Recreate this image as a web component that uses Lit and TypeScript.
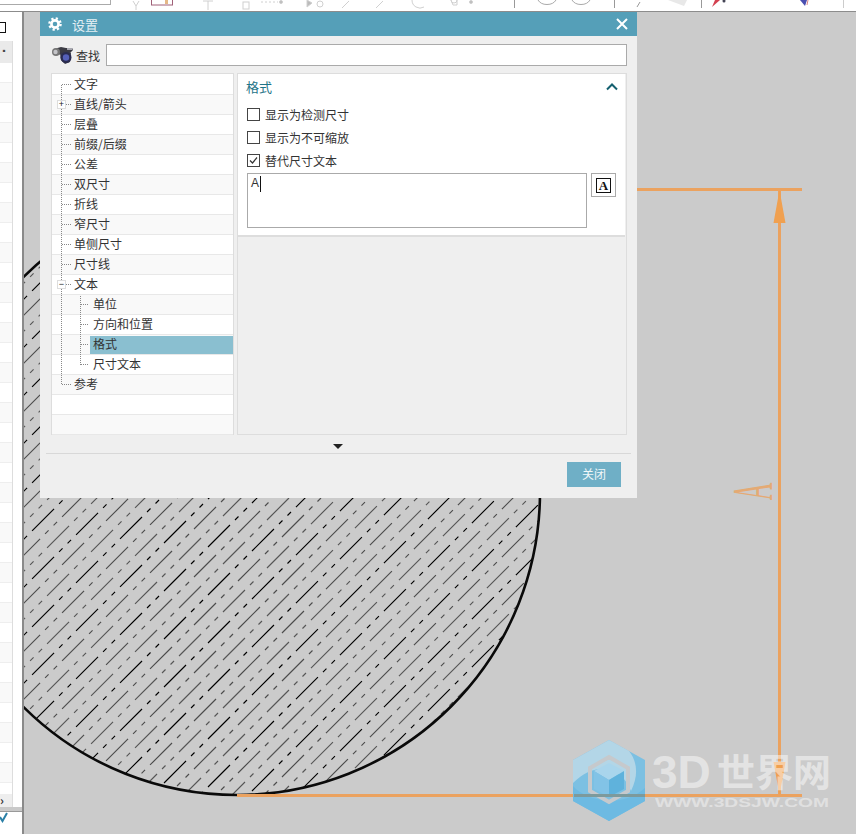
import { LitElement, html, css, svg } from "lit";
import { customElement } from "lit/decorators.js";

interface Row { t: string; lv: number; sel?: boolean; tog?: string; }
const ROWS: Row[] = [
  { t: "文字", lv: 0 },
  { t: "直线/箭头", lv: 0, tog: "+" },
  { t: "层叠", lv: 0 },
  { t: "前缀/后缀", lv: 0 },
  { t: "公差", lv: 0 },
  { t: "双尺寸", lv: 0 },
  { t: "折线", lv: 0 },
  { t: "窄尺寸", lv: 0 },
  { t: "单侧尺寸", lv: 0 },
  { t: "尺寸线", lv: 0 },
  { t: "文本", lv: 0, tog: "−" },
  { t: "单位", lv: 1 },
  { t: "方向和位置", lv: 1 },
  { t: "格式", lv: 1, sel: true },
  { t: "尺寸文本", lv: 1 },
  { t: "参考", lv: 0 },
  { t: "", lv: -1 },
  { t: "", lv: -1 },
];

function hatch() {
  const out = [];
  const phases = [8, 38, 23];
  const colors = ["#000", "#4c4c4c", "#565656"];
  const root2 = Math.SQRT2;
  for (let k = -49; k < 45; k++) {
    const c = 803 + 16 * k;
    const m = ((k % 3) + 3) % 3;
    const off = -(200 + phases[m]) * root2;
    out.push(svg`<line x1="0" y1=${c} x2=${c} y2="0"
      stroke=${colors[m]} stroke-width="1.15"
      stroke-dasharray="31.1 7.07 4.95 7.07 4.95 7.06"
      stroke-dashoffset=${off}></line>`);
  }
  return out;
}

@customElement("app-root")
export class AppRoot extends LitElement {
  static styles = css`
    :host { display: block; width: 856px; height: 834px; overflow: hidden; position: relative;
      font-family: "Noto Sans CJK SC", "Noto Sans", sans-serif; font-size: 12px; color: #333; background: #fff; }
    .top { height: 11px; background: #fff; border-bottom: 1px solid #8c8c8c; overflow: hidden; }
    .top svg { display: block; }
    .main { display: flex; height: 822px; }
    .side { width: 22px; background: #fff; display: flex; flex-direction: column; overflow: hidden; }
    .side-tick { height: 29px; flex: none; }
    .side-tick i { display: block; width: 5px; height: 9px; margin-top: 10px; border: 1px solid #111; border-left: none; }
    .side-list { width: 12px; border-right: 1px solid #ddd; flex: 1; display: flex; flex-direction: column; overflow: hidden; }
    .side-head { height: 22px; background: #eaeaea; flex: none; font-size: 8px; line-height: 20px; color: #444; }
    .side-row { height: 20px; flex: none; border-bottom: 1px solid #eee; box-sizing: border-box; }
    .side-row.alt { background: #f9f9f9; }
    .side-gap { flex: 1; }
    .side-arrow { height: 13px; background: #eee; font-size: 12px; line-height: 11px; color: #333; font-weight: bold; flex: none; }
    .side-bar { height: 5px; background: #c9c9c9; border-bottom: 1px solid #999; box-sizing: border-box; flex: none; }
    .side-check { height: 22px; flex: none; }
    .side-check svg { display: block; }
    .canvas { flex: 1; position: relative; background: #cbcbcb; border-left: 2px solid #8a8a8a; overflow: hidden; }
    .canvas svg.draw { position: absolute; left: -24px; top: -12px; }

    .dialog { position: absolute; left: 16px; top: 0; width: 597px; height: 486px; background: #efefef;
      display: flex; flex-direction: column; }
    .title { height: 24px; background: #559fb8; display: flex; align-items: center; flex: none; padding: 0 9px 0 8px; gap: 10px; font-size: 13px; }
    .title .txt { flex: 1; color: #e4f0f4; }
    .title svg { display: block; }
    .search { display: flex; align-items: center; height: 22px; margin: 8px 10px 0 11px; flex: none; }
    .search svg { display: block; flex: none; }
    .search .lbl { margin: 0 6px 0 2px; color: #333; }
    .search .inp { flex: 1; height: 22px; box-sizing: border-box; background: #fff; border: 1px solid #aaa; }
    .panes { display: flex; margin: 7px 10px 0 11px; height: 362px; gap: 3px; flex: none; }
    .tree { width: 183px; background: #fff; border: 1px solid #ddd; box-sizing: border-box; position: relative; padding-top: 1px; }
    .row { height: 20px; box-sizing: border-box; border-bottom: 1px solid #e8e8e8; padding-bottom: 2px; display: flex; align-items: center; position: relative; color: #333; }
    .row.alt { background: #f9f9f9; }
    .row.lv0 .tx { margin-left: 22px; }
    .row.lv1 .tx { margin-left: 41px; }
    .hl { position: absolute; left: 38px; right: 0; top: 1px; bottom: 0; background: #8abfd0; }
    .tx { position: relative; white-space: nowrap; }
    .tog { position: absolute; left: 5px; width: 9px; height: 9px; box-sizing: border-box; border: 1px solid #ddd; background: #fff; font: 9px/7px "Liberation Sans", sans-serif; text-align: center; color: #222; }
    .dots { position: absolute; left: 0; top: 0; pointer-events: none; }
    .right { flex: 1; border: 1px solid #ddd; box-sizing: border-box; background: #efefef; display: flex; flex-direction: column; }
    .sec { height: 163px; background: #fff; border-bottom: 2px solid #ddd; box-sizing: border-box; padding: 0 7px 0 8px; margin-right: 1px; display: flex; flex-direction: column; flex: none; }
    .sec-head { display: flex; justify-content: space-between; align-items: center; height: 24px; color: #1f7488; font-size: 13px; margin-bottom: 5px; }
    .chk { display: flex; align-items: center; height: 23px; gap: 5px; color: #333; margin-left: 1px; }
    .box { width: 11px; height: 11px; border: 1px solid #444; background: #fff; flex: none; display: block; }
    .box svg { display: block; }
    .edit { display: flex; gap: 4px; margin: 1px 0 0 1px; }
    .ta { width: 340px; height: 55px; box-sizing: border-box; border: 1px solid #aaa; background: #fff; padding: 0 3px; line-height: 18px; display: flex; align-items: flex-start; font-family: "Liberation Sans", sans-serif; font-size: 12px; color: #333; }
    .caret { display: block; width: 1px; height: 16px; background: #111; margin: 2px 0 0 1px; }
    .abtn { width: 25px; height: 24px; box-sizing: border-box; border: 1px solid #aaa; background: #fff; display: flex; align-items: center; justify-content: center; }
    .abtn span { display: block; width: 15px; height: 15px; box-sizing: border-box; border: 1px solid #111; font: bold 13px/13px "Liberation Serif", serif; text-align: center; color: #111; }
    .expand { height: 18px; box-sizing: border-box; padding: 4px 1px 0 0; display: flex; align-items: center; justify-content: center; flex: none; }
    .sep { height: 1px; background: #d8d8d8; margin: 0 6px; flex: none; }
    .foot { display: flex; justify-content: flex-end; padding: 8px 16px 0 0; }
    .close { width: 54px; height: 25px; background: #6fafc6; color: #f1f7f9; text-align: center; line-height: 24px; }
  `;

  private toolbar() {
    return html`<svg width="856" height="11" viewBox="0 0 856 11" fill="none" stroke="#d0d0d0" stroke-width="1">
      <line x1="0" y1="4.5" x2="110" y2="4.5" stroke="#aaa"></line>
      <line x1="110.5" y1="0" x2="110.5" y2="5" stroke="#aaa"></line>
      <path d="M133 1l3 5 3-5M136 6v4"></path>
      <rect x="151.5" y="-2" width="21" height="7" stroke="#a06078"></rect>
      <rect x="165" y="0" width="3" height="4" fill="#e5b886" stroke="none"></rect>
      <path d="M203 1h10M208 1v9"></path>
      <rect x="243" y="2" width="6" height="7"></rect>
      <path d="M261 2h17" stroke-dasharray="2 2"></path><circle cx="281" cy="2" r="1.5" fill="#bbb"></circle>
      <path d="M307 0v7l5-4z" fill="#bbb"></path><path d="M320 1a3 3 0 0 0 0 6a3 3 0 0 0 0-6"></path>
      <path d="M342 8l7-7M376 8l7-7"></path><path d="M412 0a8 8 0 0 0 12 7"></path>
      <path d="M451 0a3 3 0 0 0 6 0v5h-4z"></path><circle cx="471" cy="2" r="1.5" fill="#bbb"></circle>
      <line x1="514.5" y1="0" x2="514.5" y2="8" stroke="#999"></line>
      <path d="M538 0a10 8 0 0 0 18 0M572 0a10 8 0 0 0 18 0" stroke="#aaa"></path>
      <line x1="614.5" y1="0" x2="614.5" y2="8" stroke="#999"></line>
      <path d="M637 7l3-5" stroke="#999"></path>
      <path d="M668 0l16 6 3-6z" fill="#e8e8e8" stroke="none"></path>
      <line x1="701.5" y1="0" x2="701.5" y2="8" stroke="#999"></line>
      <path d="M712 7l3-7h5z" fill="#d44050" stroke="none"></path><circle cx="724" cy="1" r="1.5" fill="#445" stroke="none"></circle>
      <path d="M800 0l5 6 2-6z" fill="#4a4fb0" stroke="none"></path><path d="M808 0l-1 5" stroke="#d88"></path>
      <line x1="843.5" y1="0" x2="843.5" y2="8" stroke="#ccc"></line>
    </svg>`;
  }

  private drawing() {
    const o = "#eba25f";
    return html`<svg class="draw" width="856" height="834" viewBox="0 0 856 834" fill="none">
      <defs><clipPath id="c"><circle cx="237" cy="492" r="303"></circle></clipPath>
      <clipPath id="v"><rect x="24" y="12" width="832" height="822"></rect></clipPath></defs>
      <g clip-path="url(#v)">
        <g clip-path="url(#c)">${hatch()}</g>
        <circle cx="237" cy="492" r="303" stroke="#0a0a0a" stroke-width="2.6"></circle>
        <line x1="237" y1="795.5" x2="802" y2="795.5" stroke=${o} stroke-width="3"></line>
        <line x1="630" y1="189.5" x2="802" y2="189.5" stroke=${o} stroke-width="3"></line>
        <line x1="779.5" y1="189" x2="779.5" y2="795" stroke=${o} stroke-width="3"></line>
        <path d="M779.5 190l6 33h-12z M779.5 795l6-33h-12z" fill="#f0a050"></path>
        <text transform="translate(771.5 491.5) rotate(-90) scale(0.42 1)" text-anchor="middle" font-family="Liberation Serif, serif" font-size="58" fill=${o} opacity="0.8">A</text>
      </g>
      <g>
        <path d="M609 740l36 20v41l-36 20-36-20v-41z" fill="#7cc0e2"></path>
        <path d="M609 740l20 11c8 10 10 24 2 40-10-26-36-30-58-8v-23z" fill="#c0dbe8" opacity="0.8"></path>
        <path d="M573 786c14 16 50 22 72 2v13l-36 20-36-20z" fill="#6dbae2"></path>
        <path d="M609 757l19 11v23l-19 11-19-11v-23z" fill="none" stroke="#c6c9cc" stroke-width="4"></path>
        <path d="M609 763l15 8-15 9-15-9z" fill="#a9d5ec"></path>
        <path d="M594 771l15 9v17l-15-8z" fill="#82c3e6"></path>
        <path d="M624 771l-15 9v17l15-8z" fill="#5fb2dc"></path>
        <line x1="574" y1="795.5" x2="645" y2="795.5" stroke="#7d9a9c" stroke-width="3"></line>
        <text x="652" y="788" font-family="Liberation Sans, sans-serif" font-weight="700" font-size="46" fill="#fff" opacity="0.48">3D</text>
        <text x="717" y="786" font-family="Noto Sans CJK SC, sans-serif" font-weight="700" font-size="38" fill="#fff" opacity="0.48">世界网</text>
        <text x="655" y="807" font-family="Liberation Sans, sans-serif" font-weight="700" font-size="13" fill="#fff" opacity="0.42" textLength="174" lengthAdjust="spacingAndGlyphs">WWW.3DSJW.COM</text>
      </g>
    </svg>`;
  }

  private treeLines() {
    return html`<svg class="dots" width="183" height="362" viewBox="0 0 183 362" fill="none" stroke="#888" stroke-dasharray="1 1">
      <path d="M9.5 11v300"></path>
      <path d="M28.5 222v70"></path>
      ${ROWS.map((r, i) => {
        if (r.lv < 0) return null;
        const y = 10.5 + i * 20;
        return r.lv === 0 ? svg`<path d=${`M10 ${y}h10`}></path>` : svg`<path d=${`M29 ${y}h8`}></path>`;
      })}
    </svg>`;
  }

  render() {
    return html`
      <div class="top">${this.toolbar()}</div>
      <div class="main">
        <div class="side">
          <div class="side-tick"><i></i></div>
          <div class="side-list">
            <div class="side-head">▪</div>
            ${Array.from({ length: 36 }, (_, i) => html`<div class="side-row ${i % 2 ? "alt" : ""}"></div>`)}
            <div class="side-gap"></div>
            <div class="side-arrow">›</div>
          </div>
          <div class="side-bar"></div>
          <div class="side-check"><svg width="10" height="12" viewBox="0 0 10 12" fill="none" stroke="#2a7fa6" stroke-width="2"><path d="M0 5l2.5 4L7 1"></path></svg></div>
        </div>
        <div class="canvas">
          ${this.drawing()}
          <div class="dialog">
            <div class="title">
              <svg width="14" height="14" viewBox="0 0 14 14" fill="none" stroke="#fff">
                <circle cx="7" cy="7" r="3.6" stroke-width="2.6"></circle>
                <circle cx="7" cy="7" r="5.6" stroke-width="2.4" stroke-dasharray="2.2 2.2"></circle>
              </svg>
              <span class="txt">设置</span>
              <svg width="12" height="12" viewBox="0 0 12 12" stroke="#fff" stroke-width="2"><path d="M1 1l10 10M11 1L1 11"></path></svg>
            </div>
            <div class="search">
              <svg width="23" height="22" viewBox="0 0 23 22">
                <path d="M3 5l7-2 5 1 6 0 1 2-3 3-5-1-3 2-5 1z" fill="#3c3c44"></path>
                <circle cx="5" cy="8" r="4" fill="#777"></circle>
                <circle cx="4.500" cy="8" r="2.200" fill="#c4c4c8"></circle>
                <path d="M9 9l6-3 5 3-1 9-5 2-4-4z" fill="#3a3a44"></path>
                <circle cx="15" cy="13.500" r="5.500" fill="#2a2c50"></circle>
                <circle cx="15" cy="13.500" r="3.200" fill="#5560b8"></circle>
                <path d="M16 4l6 0-1 2-5 0z" fill="#a8a8b0"></path>
              </svg>
              <span class="lbl">查找</span>
              <div class="inp"></div>
            </div>
            <div class="panes">
              <div class="tree">
                ${ROWS.map((r, i) => html`<div class="row ${r.lv === 1 ? "lv1" : "lv0"} ${i % 2 ? "alt" : ""}">
                  ${r.sel ? html`<div class="hl"></div>` : null}
                  ${r.t ? html`<span class="tx">${r.t}</span>` : null}
                </div>`)}
                ${this.treeLines()}
                ${ROWS.map((r, i) => r.tog ? html`<span class="tog" style="top:${6 + i * 20}px">${r.tog}</span>` : null)}
              </div>
              <div class="right">
                <div class="sec">
                  <div class="sec-head"><span>格式</span>
                    <svg width="12" height="9" viewBox="0 0 12 9" fill="none" stroke="#14606f" stroke-width="2"><path d="M1 7.500l5-5 5 5"></path></svg>
                  </div>
                  <div class="chk"><span class="box"></span><span>显示为检测尺寸</span></div>
                  <div class="chk"><span class="box"></span><span>显示为不可缩放</span></div>
                  <div class="chk"><span class="box"><svg width="11" height="11" viewBox="0 0 11 11" fill="none" stroke="#333" stroke-width="1.2"><path d="M2 5.500l2.500 2.500 4.500-5.500"></path></svg></span><span>替代尺寸文本</span></div>
                  <div class="edit">
                    <div class="ta"><span>A</span><i class="caret"></i></div>
                    <div class="abtn"><span>A</span></div>
                  </div>
                </div>
              </div>
            </div>
            <div class="expand"><svg width="10" height="5" viewBox="0 0 10 5"><path d="M0 0h10L5 5z" fill="#222"></path></svg></div>
            <div class="sep"></div>
            <div class="foot"><div class="close">关闭</div></div>
          </div>
        </div>
      </div>
    `;
  }
}
